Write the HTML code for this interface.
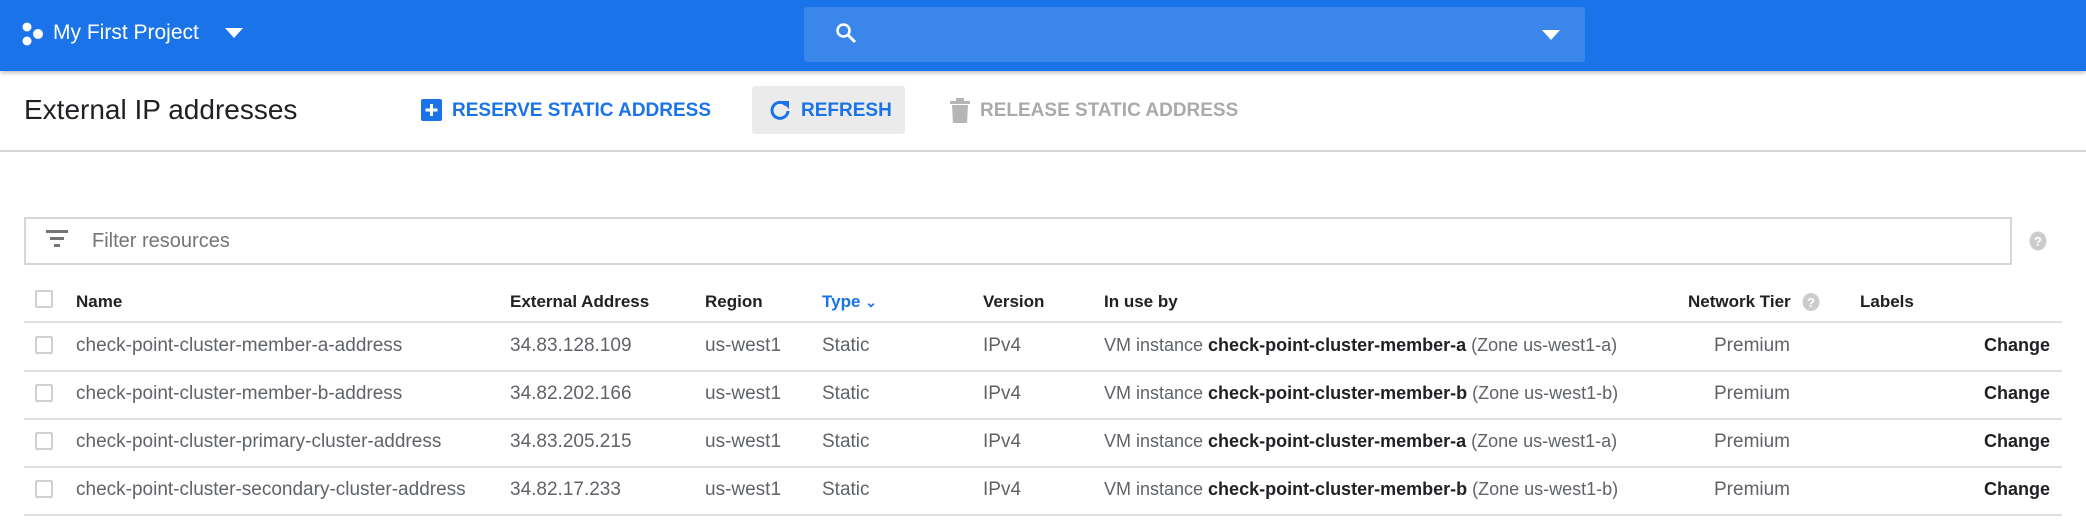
<!DOCTYPE html>
<html><head><meta charset="utf-8"><style>
*{margin:0;padding:0;box-sizing:border-box}
body{width:2086px;height:528px;background:#fff;font-family:"Liberation Sans",Arial,sans-serif;position:relative;overflow:hidden;color:#212121}
.a{position:absolute;white-space:nowrap}
.top{left:0;top:0;width:2086px;height:71px;background:#1a73e8;box-shadow:0 2px 4px rgba(0,0,0,.25)}
.hdr{font-size:17px;font-weight:bold;color:#212121;top:292px}
.cell{font-size:19px;color:#5f6368}
.line{position:absolute;left:24px;width:2038px;height:1px;background:#e0e0e0}
.cb{position:absolute;left:35px;width:18px;height:18px;border:2px solid #d0d0d0;border-radius:2px}
b{color:#202124;font-weight:bold}
</style></head><body>
<div class="a top"></div>
<svg class="a" style="left:22px;top:22px" width="22" height="24" viewBox="0 0 22 24"><circle cx="5" cy="5" r="4.5" fill="#fff"/><circle cx="16" cy="12" r="5" fill="#fff"/><circle cx="5" cy="19" r="4.5" fill="#fff"/></svg>
<div class="a" style="left:53px;top:21px;font-size:21px;color:#fff">My First Project</div>
<svg class="a" style="left:225px;top:28px" width="18" height="10"><path d="M0 0L18 0L9 10Z" fill="#fff"/></svg>
<div class="a" style="left:804px;top:7px;width:781px;height:55px;background:#3b86eb;border-radius:3px"></div>
<svg class="a" style="left:835px;top:22px" width="22" height="22" viewBox="0 0 22 22"><circle cx="8.5" cy="8.5" r="6" stroke="#fff" stroke-width="2.6" fill="none"/><path d="M13 13L20 20" stroke="#fff" stroke-width="3"/></svg>
<svg class="a" style="left:1542px;top:30px" width="18" height="10"><path d="M0 0L18 0L9 10Z" fill="#fff"/></svg>

<div class="a" style="left:24px;top:94px;font-size:28px;color:#202124">External IP addresses</div>
<div class="a" style="left:421px;top:99px;width:21px;height:22px;background:#1a73e8;border-radius:2px"></div>
<svg class="a" style="left:421px;top:99px" width="21" height="22"><path d="M10.5 5V17M4.5 11H16.5" stroke="#fff" stroke-width="3"/></svg>
<div class="a" style="left:452px;top:100px;font-size:19px;font-weight:bold;color:#1a73e8">RESERVE STATIC ADDRESS</div>
<div class="a" style="left:752px;top:86px;width:153px;height:48px;background:#ebebeb;border-radius:3px"></div>
<svg class="a" style="left:768px;top:98px" width="24" height="24" viewBox="0 0 24 24"><path d="M18 7A8 8 0 1 0 20 13" stroke="#1a73e8" stroke-width="3" fill="none"/><path d="M13 3H21V11Z" fill="#1a73e8"/></svg>
<div class="a" style="left:801px;top:100px;font-size:19px;font-weight:bold;color:#1a73e8">REFRESH</div>
<svg class="a" style="left:950px;top:98px" width="20" height="26"><rect x="0" y="3" width="20" height="3" fill="#b5b5b5"/><rect x="6" y="0" width="8" height="4" fill="#b5b5b5"/><path d="M2 7H18L17 25H3Z" fill="#b5b5b5"/></svg>
<div class="a" style="left:980px;top:100px;font-size:19px;font-weight:bold;color:#aaa">RELEASE STATIC ADDRESS</div>
<div class="a" style="left:0;top:150px;width:2086px;height:2px;background:#d6d6d6"></div>

<div class="a" style="left:24px;top:217px;width:1988px;height:48px;border:2px solid #d6d6d6"></div>
<svg class="a" style="left:46px;top:230px" width="22" height="18"><rect x="0" y="0" width="22" height="3" fill="#757575"/><rect x="4" y="7" width="14" height="3" fill="#757575"/><rect x="8" y="14" width="6" height="3" fill="#757575"/></svg>
<div class="a" style="left:92px;top:230px;font-size:20px;color:#757575">Filter resources</div>
<svg class="a" style="left:2029px;top:231px" width="18" height="20"><ellipse cx="9" cy="10" rx="8.5" ry="9.5" fill="#ccc"/><text x="9" y="15" font-size="13" font-weight="bold" fill="#fff" text-anchor="middle" font-family="Liberation Sans">?</text></svg>

<div class="cb" style="top:290px"></div>
<div class="a hdr" style="left:76px">Name</div>
<div class="a hdr" style="left:510px">External Address</div>
<div class="a hdr" style="left:705px">Region</div>
<div class="a hdr" style="left:822px;color:#1a73e8">Type <span style="font-size:14px">&#8964;</span></div>
<div class="a hdr" style="left:983px">Version</div>
<div class="a hdr" style="left:1104px">In use by</div>
<div class="a hdr" style="left:1688px">Network Tier</div>
<svg class="a" style="left:1802px;top:292px" width="18" height="20"><ellipse cx="9" cy="10" rx="8.5" ry="9" fill="#ccc"/><text x="9" y="15" font-size="13" font-weight="bold" fill="#fff" text-anchor="middle" font-family="Liberation Sans">?</text></svg>
<div class="a hdr" style="left:1860px">Labels</div>
<div class="line" style="top:321px;height:2px"></div>

<div class="cb" style="top:336px"></div>
<div class="a cell" style="left:76px;top:335px">check-point-cluster-member-a-address</div>
<div class="a cell" style="left:510px;top:335px">34.83.128.109</div>
<div class="a cell" style="left:705px;top:335px">us-west1</div>
<div class="a cell" style="left:822px;top:335px">Static</div>
<div class="a cell" style="left:983px;top:335px">IPv4</div>
<div class="a cell" style="left:1104px;top:335px;font-size:18px">VM instance <b>check-point-cluster-member-a</b> (Zone us-west1-a)</div>
<div class="a cell" style="left:1714px;top:335px">Premium</div>
<div class="a cell" style="right:36px;top:335px;font-size:18px;font-weight:bold;color:#202124">Change</div>
<div class="line" style="top:370px;height:2px"></div>

<div class="cb" style="top:384px"></div>
<div class="a cell" style="left:76px;top:383px">check-point-cluster-member-b-address</div>
<div class="a cell" style="left:510px;top:383px">34.82.202.166</div>
<div class="a cell" style="left:705px;top:383px">us-west1</div>
<div class="a cell" style="left:822px;top:383px">Static</div>
<div class="a cell" style="left:983px;top:383px">IPv4</div>
<div class="a cell" style="left:1104px;top:383px;font-size:18px">VM instance <b>check-point-cluster-member-b</b> (Zone us-west1-b)</div>
<div class="a cell" style="left:1714px;top:383px">Premium</div>
<div class="a cell" style="right:36px;top:383px;font-size:18px;font-weight:bold;color:#202124">Change</div>
<div class="line" style="top:418px;height:2px"></div>

<div class="cb" style="top:432px"></div>
<div class="a cell" style="left:76px;top:431px">check-point-cluster-primary-cluster-address</div>
<div class="a cell" style="left:510px;top:431px">34.83.205.215</div>
<div class="a cell" style="left:705px;top:431px">us-west1</div>
<div class="a cell" style="left:822px;top:431px">Static</div>
<div class="a cell" style="left:983px;top:431px">IPv4</div>
<div class="a cell" style="left:1104px;top:431px;font-size:18px">VM instance <b>check-point-cluster-member-a</b> (Zone us-west1-a)</div>
<div class="a cell" style="left:1714px;top:431px">Premium</div>
<div class="a cell" style="right:36px;top:431px;font-size:18px;font-weight:bold;color:#202124">Change</div>
<div class="line" style="top:466px;height:2px"></div>

<div class="cb" style="top:480px"></div>
<div class="a cell" style="left:76px;top:479px">check-point-cluster-secondary-cluster-address</div>
<div class="a cell" style="left:510px;top:479px">34.82.17.233</div>
<div class="a cell" style="left:705px;top:479px">us-west1</div>
<div class="a cell" style="left:822px;top:479px">Static</div>
<div class="a cell" style="left:983px;top:479px">IPv4</div>
<div class="a cell" style="left:1104px;top:479px;font-size:18px">VM instance <b>check-point-cluster-member-b</b> (Zone us-west1-b)</div>
<div class="a cell" style="left:1714px;top:479px">Premium</div>
<div class="a cell" style="right:36px;top:479px;font-size:18px;font-weight:bold;color:#202124">Change</div>
<div class="line" style="top:514px;height:2px"></div>
</body></html>
